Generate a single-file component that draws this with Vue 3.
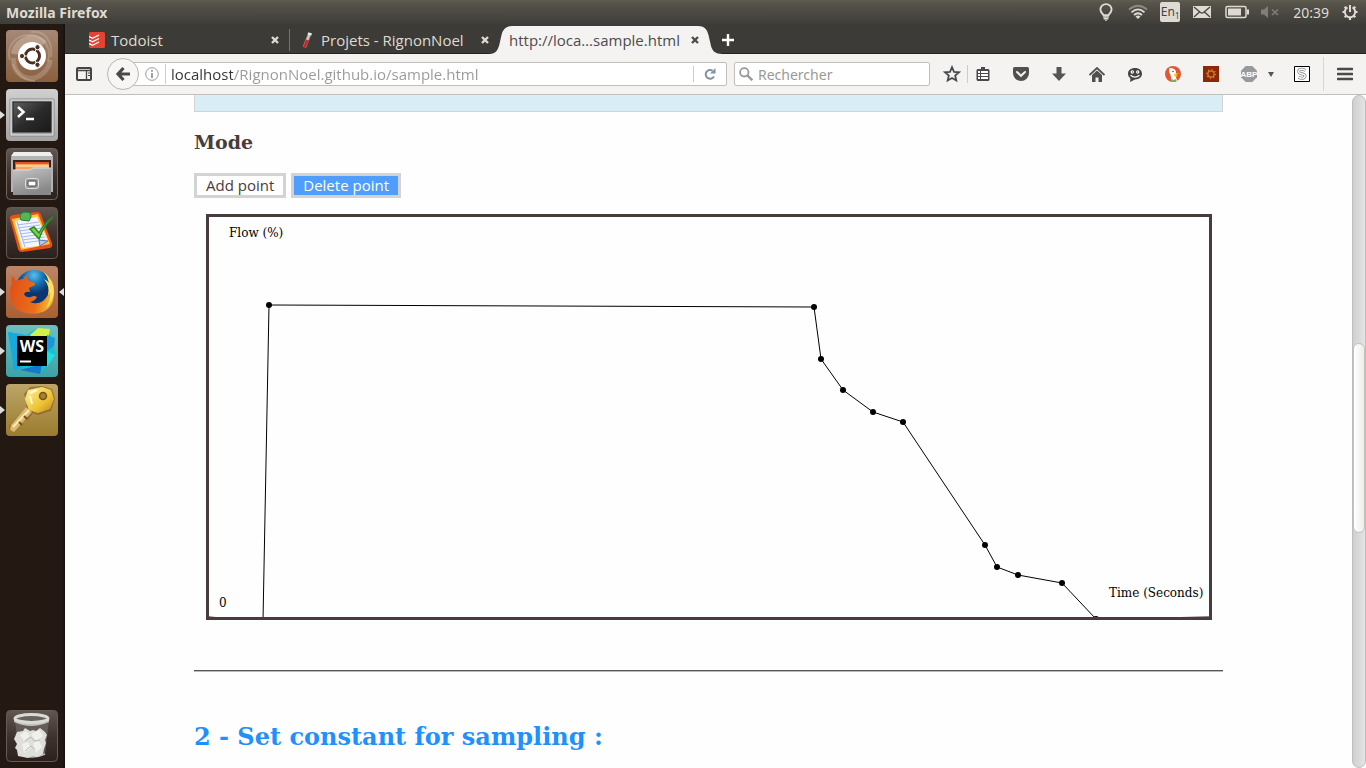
<script setup>
import { ref } from 'vue'

const mode = ref('delete')
const address = ref('localhost/RignonNoel.github.io/sample.html')
const search = ref('')

const points = [
  [60, 88], [605, 90], [612, 142], [634, 173], [664, 195], [694, 205],
  [776, 328], [788, 350], [809, 358], [853, 366], [887, 402],
]
const curve = [[0, 400], [54, 404], ...points, [1000, 400]]
  .map((p) => p.join(','))
  .join(' ')
</script>

<template>
  <div class="desktop">
    <header class="panel">
      <span class="panel-title">Mozilla Firefox</span>
      <div class="indicators">
        <svg class="i-bulb" width="16" height="18" viewBox="0 0 16 18" fill="none" stroke="#dfdbd2">
          <path d="M5.5 12.200C4.900 10.600 2.400 9.400 2.400 6.500a5.600 5.400 0 0 1 11.200 0c0 2.900-2.500 4.100-3.100 5.700z" stroke-width="1.900" />
          <path d="M5.200 14h5.600M5.600 15.800h4.800" stroke-width="1.500" /><path d="M7 17.200h2" />
        </svg>
        <svg class="i-wifi" width="20" height="16" viewBox="0 0 20 16" fill="none" stroke-width="1.800">
          <path d="M1 5.500Q10-2 19 5.500" stroke="#8b8982" />
          <path d="M3.500 8.300Q10 2.500 16.500 8.300M6 11q4-3.600 8 0" stroke="#dfdbd2" />
          <path d="M10 15l-2.500-2.600q2.500-1.800 5 0z" fill="#dfdbd2" />
        </svg>
        <span class="lang">En<sub>1</sub></span>
        <svg class="i-mail" width="18" height="14" viewBox="0 0 18 14">
          <path d="M0 1h18v12H0z" fill="#dfdbd2" />
          <path d="M1 2l6.500 5.500q1.500 1.200 3 0L17 2M1 12l5.500-5M17 12l-5.500-5" fill="none" stroke="#44433d" stroke-width="1.300" />
        </svg>
        <svg class="i-battery" width="24" height="14" viewBox="0 0 24 14">
          <rect x="1" y="1.500" width="20" height="11" rx="1.500" fill="none" stroke="#dfdbd2" stroke-width="1.500" />
          <path d="M3 3.500h13v7H3zM22 4.500h2v5h-2z" fill="#dfdbd2" />
        </svg>
        <svg class="i-sound" width="18" height="14" viewBox="0 0 18 14">
          <path d="M0 4.500h3L7 1v12L3 9.500H0z" fill="#807e77" />
          <path d="M11 4.500l6 5.500M17 4.500L11 10" stroke="#807e77" stroke-width="1.600" />
        </svg>
        <span class="clock">20:39</span>
        <svg class="i-power" width="18" height="18" viewBox="0 0 18 18" fill="none" stroke="#dfdbd2">
          <path d="M6.500 4.400a5.200 5.200 0 1 0 5 0" stroke-width="2" />
          <path d="M9 2v7" stroke-width="2" />
          <path d="M9 14v3M1.500 9h2.500M14 9h2.500M3.700 3.700l1.700 1.700M14.300 3.700l-1.700 1.700M3.700 14.300l1.700-1.700M14.300 14.300l-1.700-1.700" stroke-width="2.200" />
        </svg>
      </div>
    </header>

    <nav class="launcher" aria-label="Launcher">
      <button class="app" aria-label="Dash">
        <svg viewBox="0 0 52 52">
          <defs>
            <linearGradient id="dashBg" x2="0" y2="1"><stop stop-color="#a58977" /><stop offset=".5" stop-color="#977358" /><stop offset="1" stop-color="#89603f" /></linearGradient>
          </defs>
          <rect width="52" height="52" rx="4" fill="url(#dashBg)" />
          <g fill="none" stroke="#e8d9cc">
            <path d="M4 30C0 18 8 6 22 5c16-1 24 14 20 26" opacity=".25" stroke-width="2" />
            <path d="M8 24C12 8 30 4 38 14" opacity=".35" stroke-width="7" />
            <path d="M8 28c-2 12 8 22 20 20 8-2 16-10 16-18" opacity=".25" stroke-width="5" />
            <path d="M25 2c14-2 22 10 20 25M7 34q6 16 22 17" opacity=".25" stroke-width="2" />
          </g>
          <circle cx="26" cy="26" r="14" fill="#fff" />
          <circle cx="26.500" cy="26" r="7" fill="none" stroke="#4c2f20" stroke-width="3" />
          <path d="M26.500 26L18 26M26.500 26l4.500-8M26.500 26l4.500 8" stroke="#fff" stroke-width="1" />
          <circle cx="26.500" cy="26" r="5" fill="#fff" />
          <g fill="#4c2f20" stroke="#fff" stroke-width="1"><circle cx="16" cy="26" r="2.600" /><circle cx="31.500" cy="17.200" r="2.600" /><circle cx="31.500" cy="34.800" r="2.600" /></g>
        </svg>
      </button>
      <button class="app running" aria-label="Terminal">
        <svg viewBox="0 0 52 52">
          <defs>
            <linearGradient id="termBg" x2="0" y2="1"><stop stop-color="#d0d0d0" /><stop offset="1" stop-color="#a4a4a4" /></linearGradient>
            <linearGradient id="termScreen" x2="1" y2="1"><stop stop-color="#606060" /><stop offset=".5" stop-color="#2b2b2b" /><stop offset="1" stop-color="#1a1a1a" /></linearGradient>
          </defs>
          <rect width="52" height="52" rx="4" fill="url(#termBg)" />
          <rect x="4" y="10" width="44" height="37" rx="1" fill="#eee" stroke="#888" />
          <rect x="5.500" y="11.500" width="41" height="34" fill="#a5a5a5" />
          <rect x="7" y="13" width="38" height="30" fill="url(#termScreen)" stroke="#222" />
          <path d="M12 18l5.500 5-5.500 5" fill="none" stroke="#fff" stroke-width="2.500" />
          <path d="M20 30h8" stroke="#fff" stroke-width="2.500" />
        </svg>
      </button>
      <button class="app" aria-label="Files">
        <svg viewBox="0 0 52 52">
          <defs>
            <linearGradient id="darkTile" x2="0" y2="1"><stop stop-color="#625651" /><stop offset=".5" stop-color="#3e332e" /><stop offset="1" stop-color="#2b211c" /></linearGradient>
            <linearGradient id="drawer" x2=".4" y2="1"><stop stop-color="#c5c5c5" /><stop offset="1" stop-color="#888" /></linearGradient>
          </defs>
          <rect x=".5" y=".5" width="51" height="51" rx="4" fill="url(#darkTile)" stroke="#70645e" />
          <path d="M8 4h36l3 5v35h-2V12H7v32H5V9z" fill="#b4b4b4" /><path d="M8 4h36l3 4H5z" fill="#eee" />
          <path d="M7 12h38v12H7z" fill="#3a201a" />
          <path d="M9 14h34v8H9z" fill="#df5523" /><path d="M10 16h33v7H10z" fill="#f9a45c" /><path d="M10 18h33" stroke="#fff3dc" />
          <path d="M7 22h17l3-2h18v27H7z" fill="url(#drawer)" />
          <path d="M7 22h17l3-2h18" fill="none" stroke="#ddd" />
          <rect x="19.500" y="30.500" width="13" height="10" rx="2" fill="#999" stroke="#ddd" />
          <rect x="22" y="33" width="8" height="5" rx="1" fill="#fff" stroke="#444" />
        </svg>
      </button>
      <button class="app" aria-label="Tasks">
        <svg viewBox="0 0 52 52">
          <rect x=".5" y=".5" width="51" height="51" rx="4" fill="url(#darkTile)" stroke="#665a54" />
          <path d="M4 12q-1-3 3-4l24-3q3 0 4 3l11 28q1 4-2 5l-28 4q-3 0-4-3z" fill="#e95018" />
          <path d="M6 12l26-5 12 30-29 6z" fill="#ffc73b" />
          <path d="M9 14l22-4 11 24-10 5-16 2z" fill="#f3f5ff" />
          <path d="M11 18l22-3M12 21l22-3M13 24l22-3M14 27l22-3M15 30l23-3M16 33l23-3M17 36l22-3M11 14l8 26" stroke="#a9b9ee" stroke-width="1" />
          <path d="M34 39l-1-6 9 1z" fill="#b5c8e9" stroke="#5a78b5" />
          <path d="M14 10q0-5 6-5 5 0 5 5l-2 4-8-1z" fill="#59b458" stroke="#277d35" />
          <path d="M24 22l4-2 5 6Q38 16 47 10q-9 8-14 22z" fill="#77d34d" stroke="#298c22" stroke-width="1.500" />
        </svg>
      </button>
      <button class="app running focused" aria-label="Firefox">
        <svg viewBox="0 0 52 52">
          <defs>
            <linearGradient id="foxBg" x2="0" y2="1"><stop stop-color="#bc8568" /><stop offset="1" stop-color="#a96034" /></linearGradient>
            <radialGradient id="globe" cx=".5" cy=".15"><stop stop-color="#59c0e9" /><stop offset=".5" stop-color="#1874b6" /><stop offset="1" stop-color="#0b3570" /></radialGradient>
            <linearGradient id="fox" x1="0" x2="1" y2=".2"><stop stop-color="#df4d18" /><stop offset=".7" stop-color="#ea6f1c" /><stop offset="1" stop-color="#f6b32e" /></linearGradient>
          </defs>
          <rect width="52" height="52" rx="4" fill="url(#foxBg)" />
          <circle cx="28" cy="22" r="18" fill="url(#globe)" />
          <path d="M6 10q2 1 4 5 4-2 7-2 2-4 6-5-3 3-1 6l4 2q4 1 3 3l-6 3 1 4q-5-1-6 2 2 4 7 3 3-2 6 0-2 4-7 5 7 3 13-1 7-6 6-14 2 1 2 4 3-9-2-16 5 7 5 18 0 20-22 21Q4 46 4 27 4 21 6 18 5 14 6 10z" fill="url(#fox)" />
          <path d="M38 6q10 8 10 20-1 10-8 16 5-9 4-16l-2 3q2-9-4-16 4 2 5 4-1-6-5-11z" fill="#ffe05f" />
        </svg>
      </button>
      <button class="app running" aria-label="WebStorm">
        <svg viewBox="0 0 52 52">
          <defs><linearGradient id="wsBg" x2="0" y2="1"><stop stop-color="#6cbfc1" /><stop offset="1" stop-color="#3da2a7" /></linearGradient></defs>
          <rect width="52" height="52" rx="4" fill="url(#wsBg)" />
          <path d="M2 7l18 3 12-7 12 7 5 19-8 12-6 6-19-5-7 1z" fill="#12c0d8" />
          <path d="M2 7l17 3-4 34-7 1z" fill="#18a9da" /><path d="M24 10l8-7 12 1-2 10-10 3z" fill="#d8ee48" />
          <path d="M41 10l8 3-1 8-7 5z" fill="#1797dd" /><path d="M14 45l22-6-2 10z" fill="#1479cb" /><path d="M40 26l9 4-8 12z" fill="#19e1df" />
          <path d="M11 11h30v30H11z" fill="#000" /><path d="M14 36.500h11" stroke="#fff" stroke-width="2" />
          <text class="ws-text" x="26" y="27" text-anchor="middle">WS</text>
        </svg>
      </button>
      <button class="app running" aria-label="Keys">
        <svg viewBox="0 0 52 52">
          <defs>
            <linearGradient id="keyBg" x2="0" y2="1"><stop stop-color="#bba568" /><stop offset="1" stop-color="#9b7c2d" /></linearGradient>
            <linearGradient id="keyFill" x2="1" y2="1"><stop stop-color="#fff4a0" /><stop offset=".6" stop-color="#efc435" /><stop offset="1" stop-color="#bf861b" /></linearGradient>
          </defs>
          <rect width="52" height="52" rx="4" fill="url(#keyBg)" />
          <path d="M24 3L36 2l10 3 3 10-4 12-13 4-5-2-5 7-3-1-3 5-4 1-3 5-5 1-1-5 17-19 1-5-3-8z" fill="#8a5721" opacity=".6" />
          <path d="M22 6l14-3 9 3 3 9-4 10-12 4-9-3-4-11z" fill="url(#keyFill)" />
          <path d="M20 23l6 5L8 48l-4-2 1-5z" fill="#dcb96c" /><path d="M23 26L7 43" stroke="#fbedb9" stroke-width="2" />
          <path d="M21 35l-3-3M16 41l-3-3" stroke="#7c4d20" stroke-width="2" />
          <circle cx="37" cy="12" r="3.500" fill="#a38132" stroke="#795319" stroke-width="1.500" />
          <path d="M24 9l7-3M24 12l2 8" stroke="#fffbd4" stroke-width="2" />
        </svg>
      </button>
      <button class="app trash" aria-label="Trash">
        <svg viewBox="0 0 52 52">
          <rect x=".5" y=".5" width="51" height="51" rx="4" fill="url(#darkTile)" stroke="#665a54" />
          <path d="M9 10h34l-4 35q-13 5-26 0z" fill="#6d6864" opacity=".7" />
          <path d="M13 44q13 6 26 0" fill="none" stroke="#bbb" stroke-width="1.500" />
          <path d="M11 22l6-1 2-3 5 3 3-1 3 1 4-3 5 4 2 3-2 5 1 3-2 6-1 5-6 3-4-1-5 2-5-1-5-1-1-6-2-2 2-4-3-5z" fill="#dededb" />
          <path d="M14 25l6-4 4 5-6 5zM25 24l8-4 4 6-7 5zM16 34l6-2 3 6-7 5zM27 33l6-2 3 6-6 6z" fill="#f0f0ed" />
          <path d="M19 31l6-4 3 4 6-1M19 41l6-5 4 4" fill="none" stroke="#bbb" />
          <path d="M8 8v4q17 8 35 0V8q-17 7-35 0z" fill="#bfbfbc" />
          <ellipse cx="25.500" cy="8.500" rx="16.500" ry="4" fill="#68625e" stroke="#d9d9d6" stroke-width="3" />
        </svg>
      </button>
    </nav>

    <section class="browser">
      <div class="tabs">
        <div class="tab">
          <svg width="16" height="16" viewBox="0 0 16 16"><rect width="16" height="16" rx="1.500" fill="#e44332" /><path d="M0 4.500l3.500 1.800L10 3M0 8l3.500 1.800L10 6.500M0 11.500l3.500 1.800L10 10" fill="none" stroke="#fff" stroke-width="1.300" /></svg>
          <button class="tab-label">Todoist</button>
          <button class="close" aria-label="Close tab"><svg width="8" height="8" viewBox="0 0 8 8"><path d="M1 1l6 6M7 1L1 7" stroke="currentColor" stroke-width="2.400" /></svg></button>
        </div>
        <div class="tab divided">
          <svg width="16" height="16" viewBox="0 0 16 16"><path d="M9.500.5l3 1-5.500 14-3-1z" fill="#c8c8c8" stroke="#777" stroke-width=".6" /><path d="M7 7.500l3 1-3.200 7-2.600-1z" fill="#cf2620" /><path d="M9.300.5l3.500 1-.5 2-3.600-1z" fill="#eee" /></svg>
          <button class="tab-label">Projets - RignonNoel</button>
          <button class="close" aria-label="Close tab"><svg width="8" height="8" viewBox="0 0 8 8"><path d="M1 1l6 6M7 1L1 7" stroke="currentColor" stroke-width="2.400" /></svg></button>
        </div>
        <div class="tab active">
          <svg class="tab-shape" viewBox="0 0 234 28" preserveAspectRatio="none"><path d="M0 28C7 28 9 24 10.500 18L12.500 9C14 3 17 0 23 0H209c6 0 9 3 10.500 9l2.500 11c1.500 5 4 8 12 8z" fill="#f4f3f2" /></svg>
          <button class="tab-label">http://loca…sample.html</button>
          <button class="close" aria-label="Close tab"><svg width="8" height="8" viewBox="0 0 8 8"><path d="M1 1l6 6M7 1L1 7" stroke="currentColor" stroke-width="2.400" /></svg></button>
        </div>
        <button class="new-tab" aria-label="New tab"><svg width="14" height="14" viewBox="0 0 14 14"><path d="M7 1v12M1 7h12" stroke="#fff" stroke-width="2.400" /></svg></button>
      </div>

      <div class="toolbar">
        <button class="tool sidebar" aria-label="Sidebar"><svg width="16" height="14" viewBox="0 0 16 14"><rect x="1" y="1" width="14" height="12" rx="1" fill="none" stroke="#444" stroke-width="2" /><path d="M1 3.500h14M10.500 3v10" stroke="#444" stroke-width="1.300" /><path d="M12 6h2M12 8.500h2" stroke="#444" /></svg></button>
        <button class="back" aria-label="Back"><svg width="16" height="16" viewBox="0 0 16 16"><path d="M8.500 2L3 8l5.500 6M3 8h12" fill="none" stroke="#4a4a4a" stroke-width="3.200" /></svg></button>
        <div class="address">
          <svg class="info" width="14" height="14" viewBox="0 0 14 14"><circle cx="7" cy="7" r="6.300" fill="none" stroke="#999" /><path d="M7 3v1.800M7 6v5" stroke="#888" stroke-width="1.600" /></svg>
          <input v-model="address" class="url" type="text" aria-label="Address" spellcheck="false" />
          <button class="reload" aria-label="Reload"><svg width="12" height="12" viewBox="0 0 12 12"><path d="M8.500 2.600A4.400 4.400 0 1 0 10 8.500" fill="none" stroke="#8292a2" stroke-width="2" /><path d="M11.500 0v5.500H6z" fill="#8292a2" /></svg></button>
        </div>
        <div class="search">
          <svg width="14" height="14" viewBox="0 0 14 14" fill="none" stroke="#999"><circle cx="5.300" cy="5.300" r="4.200" stroke-width="1.800" /><path d="M8.500 8.500l4.800 4.800" stroke-width="2.400" /></svg>
          <input v-model="search" type="text" placeholder="Rechercher" aria-label="Rechercher" />
        </div>
        <div class="tools">
          <button class="tool star" aria-label="Bookmark"><svg width="18" height="18" viewBox="0 0 18 18"><path d="M9 2.200l2 4.600 5 .5-3.800 3.300 1.100 4.900L9 13l-4.300 2.500 1.100-4.900L2 7.300l5-.5z" fill="none" stroke="#4a4a4a" stroke-width="1.800" /></svg></button>
          <button class="tool ruled" aria-label="Bookmarks list"><svg width="14" height="16" viewBox="0 0 14 16"><path d="M5 1h4v2h3.500l1 1v10l-1 1h-11l-1-1V4l1-1H5z" fill="#4a4a4a" /><path d="M2 6h2M5 6h7M2 9h2M5 9h7M2 12h2M5 12h7" stroke="#fff" stroke-width="1.800" /></svg></button>
          <button class="tool" aria-label="Pocket"><svg width="16" height="14" viewBox="0 0 16 14"><path d="M0 1.500Q0 0 1.500 0h13Q16 0 16 1.500V6a8 8 0 0 1-16 0z" fill="#505050" /><path d="M4 5l4 3.800L12 5" fill="none" stroke="#f4f3f2" stroke-width="2" stroke-linecap="round" /></svg></button>
          <button class="tool" aria-label="Downloads"><svg width="14" height="14" viewBox="0 0 14 14"><path d="M4.500 0h5v6.500H14L7 14 0 6.500h4.500z" fill="#555" /></svg></button>
          <button class="tool" aria-label="Home"><svg width="16" height="15" viewBox="0 0 16 15"><path d="M.5 8L8 1l7.500 7" fill="none" stroke="#505050" stroke-width="1.800" /><path d="M3 8l5-4.500L13 8v7H9.500v-4.500h-3V15H3z" fill="#505050" /></svg></button>
          <button class="tool" aria-label="Chat"><svg width="16" height="15" viewBox="0 0 16 15"><path d="M8 1c4.200 0 7 2.300 7 5.700s-2.800 5.700-7 5.700L3 15l.5-3.500C2 10.400 1 8.600 1 6.700 1 3.300 3.800 1 8 1z" fill="#444" /><circle cx="5.300" cy="5" r="1.700" fill="#fff" /><circle cx="10.700" cy="5" r="1.700" fill="#fff" /><path d="M5 5h1M10 5h1" stroke="#444" /><path d="M3.500 8.300q4.500 3.800 9 0" fill="none" stroke="#fff" stroke-width="1.300" /></svg></button>
          <button class="tool" aria-label="DuckDuckGo"><svg width="16" height="16" viewBox="0 0 16 16"><circle cx="8" cy="8" r="8" fill="#de5833" /><path d="M4 2.500q2-1 4 0 3 1 3 4l-.5 3 1.500 5q-2 1.500-5 1L5.500 9Q3.500 6 4 2.500z" fill="#fff" /><path d="M9 8q3-1 5-.5L11 9l2 1.200Q10 11 9 10z" fill="#fdd20a" /><path d="M7 13l2 1 2-1v3H7z" fill="#65bc46" /><circle cx="8" cy="5.500" r=".8" fill="#2d4f8e" /></svg></button>
          <button class="tool" aria-label="Sun"><svg width="16" height="16" viewBox="0 0 16 16"><path d="M0 0h16v16H0z" fill="#8c2806" /><circle cx="8" cy="8" r="3.200" fill="none" stroke="#d9862a" stroke-width="1.300" /><circle cx="8" cy="8" r="4.600" fill="none" stroke="#d9862a" stroke-width="1.200" stroke-dasharray="1 2.600" /></svg></button>
          <button class="tool" aria-label="Adblock Plus"><svg width="16" height="16" viewBox="0 0 16 16"><path d="M4.700 0h6.600L16 4.700v6.600L11.300 16H4.700L0 11.300V4.700z" fill="#999" /><text class="abp-text" x="8" y="11" text-anchor="middle">ABP</text></svg></button>
          <button class="caret" aria-label="Adblock menu"><svg width="6" height="5" viewBox="0 0 6 5"><path d="M0 0h6L3 5z" fill="#555" /></svg></button>
          <button class="tool stylish" aria-label="Stylish"><svg width="16" height="16" viewBox="0 0 16 16"><path d="M.5.5h15v15H.5z" fill="#fff" stroke="#000" /><path d="M11.500 4.300Q8 2.500 5.500 3.700c-1.500 1.400-.8 3.300 1.200 3.800l3 .8c2 .7 1.700 3-.2 3.700q-2.500.5-5-.7" fill="none" stroke="#888" stroke-width="3" /><path d="M11.500 4.300Q8 2.500 5.500 3.700c-1.500 1.400-.8 3.300 1.200 3.800l3 .8c2 .7 1.700 3-.2 3.700q-2.500.5-5-.7" fill="none" stroke="#fff" stroke-width="1.400" /></svg></button>
          <button class="menu" aria-label="Menu"><svg width="16" height="14" viewBox="0 0 16 14"><path d="M1 2h14M1 7h14M1 12h14" stroke="#4a4a4a" stroke-width="2.600" stroke-linecap="round" /></svg></button>
        </div>
      </div>

      <div class="view">
        <main class="page">
          <div class="notice"></div>
          <h3>Mode</h3>
          <div class="modes">
            <button :class="{ selected: mode === 'add' }" @click="mode = 'add'">Add point</button>
            <button :class="{ selected: mode === 'delete' }" @click="mode = 'delete'">Delete point</button>
          </div>
          <figure class="chart">
            <svg viewBox="0 0 1000 400">
              <polyline :points="curve" fill="none" stroke="#000" stroke-width="1" />
              <circle v-for="(p, i) in points" :key="i" :cx="p[0]" :cy="p[1]" r="3" />
              <text x="20" y="20">Flow (%)</text>
              <text x="10" y="390">0</text>
              <text x="900" y="380">Time (Seconds)</text>
            </svg>
          </figure>
          <hr />
          <h2>2 - Set constant for sampling :</h2>
        </main>
        <div class="scrollbar"><div class="thumb"></div></div>
      </div>
    </section>
  </div>
</template>

<style>
body { margin: 0; overflow: hidden; }
</style>

<style scoped>
.desktop {
  display: grid;
  grid-template: 24px minmax(0, 1fr) / 65px minmax(0, 1fr);
  height: 100vh;
  font-family: "Noto Sans", "Open Sans", sans-serif;
  font-size: 14px;
}
button { margin: 0; padding: 0; border: 0; background: none; font: inherit; color: inherit; }
input { min-width: 0; padding: 0; border: 0; outline: 0; background: none; font: inherit; }
svg { display: block; flex: none; }

.panel {
  grid-column: 1 / 3;
  display: flex;
  align-items: center;
  justify-content: space-between;
  padding: 0 7px 0 6px;
  background: linear-gradient(#5f5d51, #55534a 15%, #3e3d39);
  color: #dfdbd2;
}
.panel-title { font-size: 14px; font-weight: 700; }
.indicators { display: flex; align-items: center; }
.i-wifi { margin-left: 14px; }
.lang {
  margin-left: 12px;
  width: 20px;
  height: 20px;
  border-radius: 2px;
  background: #dfdbd2;
  color: #44433d;
  font-size: 12px;
  line-height: 20px;
  text-align: center;
  white-space: nowrap;
}
.lang sub { font-size: 8px; line-height: 8px; }
.i-mail { margin-left: 13px; }
.i-battery { margin-left: 14px; }
.i-sound { margin-left: 12px; }
.clock { margin: 0 12px 0 14px; }

.launcher {
  display: flex;
  flex-direction: column;
  gap: 7px;
  padding: 6px 7px 6px 6px;
  background: linear-gradient(90deg, #241813 62px, #17100c);
}
.app { position: relative; width: 52px; height: 52px; }
.app svg { width: 52px; height: 52px; }
.running::before, .focused::after {
  content: "";
  position: absolute;
  top: 22px;
  left: -6px;
  border: 4px solid transparent;
  border-left: 5px solid #ddd;
  border-right: 0;
}
.focused::after { left: auto; right: -6px; border-left: 0; border-right: 5px solid #ddd; }
.trash { margin-top: auto; }
.ws-text { font: 700 16px "Open Sans", sans-serif; fill: #fff; }

.browser { display: flex; flex-direction: column; min-height: 0; }
.tabs {
  display: flex;
  align-items: flex-end;
  height: 30px;
  padding-left: 14px;
  background: linear-gradient(#3c3b37 29px, #262522 29px);
  color: #dfdbd2;
}
.tab {
  position: relative;
  display: flex;
  align-items: center;
  gap: 6px;
  width: 210px;
  height: 28px;
  padding: 0 10px;
}
.divided::before {
  content: "";
  position: absolute;
  left: 0;
  top: 3px;
  width: 1px;
  height: 22px;
  background: #77756f;
}
.tab, .toolbar, .search, .address { box-sizing: border-box; }
.tab-label {
  flex: 1;
  min-width: 0;
  z-index: 1;
  font-family: "Open Sans", sans-serif;
  font-size: 15px;
  line-height: 20px;
  text-align: left;
  white-space: nowrap;
}
.close { display: grid; z-index: 1; }
.active { color: #4c4c4c; }
.tab-shape { position: absolute; left: -10px; top: 0; width: 234px; height: 28px; }
.new-tab { display: grid; place-items: center; width: 38px; height: 28px; }

.toolbar {
  display: flex;
  align-items: center;
  height: 41px;
  border-bottom: 1px solid #c2beba;
  background: #f4f3f2;
}
.tool { display: grid; place-items: center; width: 32px; height: 32px; }
.sidebar { margin-left: 3px; }
.back {
  display: grid;
  place-items: center;
  box-sizing: border-box;
  z-index: 1;
  width: 32px;
  height: 32px;
  margin-left: 7px;
  border: 1px solid #b9b6b2;
  border-radius: 50%;
  background: #f7f6f5;
}
.address, .search {
  display: flex;
  align-items: center;
  height: 24px;
  border: 1px solid #c2beba;
  border-radius: 2px;
  background: #fff;
}
.address { flex: 1; margin-left: -8px; }
.info { margin-left: 13px; }
.url {
  flex: 1;
  margin-left: 6px;
  padding-left: 5px;
  border-left: 1px solid #ccc;
  background: linear-gradient(90deg, #333 67px, #999 67px);
  background-clip: text;
  -webkit-background-clip: text;
  color: transparent;
  font-family: "Open Sans", sans-serif;
  font-size: 15px;
}
.url { height: 20px; line-height: 20px; }
.reload { display: grid; place-items: center; width: 33px; height: 16px; border-left: 1px solid #ccc; }
.search { width: 196px; margin-left: 7px; padding-left: 4px; gap: 5px; }
.search input { flex: 1; }
.search input::placeholder { color: #999; opacity: 1; }
.tools { display: flex; align-items: center; gap: 6px; padding-right: 5px; }
.star { width: 28px; margin-left: 8px; margin-right: -5px; }
.ruled { position: relative; }
.ruled::before { content: ""; position: absolute; left: 0; top: 7px; width: 1px; height: 18px; background: #ccc; }
.caret { display: grid; place-items: center; width: 10px; margin-left: -5px; }
.stylish { margin-left: 4px; }
.menu {
  display: grid;
  place-items: center;
  width: 38px;
  height: 34px;
  padding-left: 5px;
  margin-left: -1px;
  border-left: 1px solid #d8d6d3;
}
.abp-text { font: 700 8px "Liberation Sans", sans-serif; fill: #fff; }

.view { display: flex; flex: 1; min-height: 0; background: #fefefe; }
.page {
  flex: 1;
  min-width: 0;
  padding: 0 129px;
  overflow: hidden;
  font-family: "DejaVu Serif", serif;
}
.notice { height: 16px; border: 1px solid #d3d3d3; border-top: 0; background: #d9edf7; }
h3 { margin: 19px 0; color: #483c3c; font-size: 19px; line-height: 23px; }
.modes { display: flex; gap: 5px; }
.modes button {
  height: 25px;
  padding: 0 9px;
  border: 3px solid #d3d3d3;
  background: #fff;
  color: #483c3c;
  font-family: "Open Sans", sans-serif;
  font-size: 15px;
  line-height: 19px;
}
.modes .selected { background: #4f9dfd; color: #fff; }
.chart { margin: 16px 11px 50px 12px; border: 3px solid #483c3c; }
.chart svg { width: 100%; overflow: hidden; }
.chart text { font-family: "DejaVu Serif", serif; font-size: 12px; }
hr { height: 0; margin: 0; border: 0; border-top: 1px solid #555; border-bottom: 1px solid #bbb; }
h2 { margin: 50px 0 0; color: #1e90ff; font-size: 24px; line-height: 30px; }

.scrollbar {
  box-sizing: border-box;
  width: 14px;
  border: 1px solid #bfbdb9;
  border-radius: 7px;
  background: linear-gradient(90deg, #cfcfcf, #e4e4e4);
}
.thumb {
  box-sizing: border-box;
  height: 190px;
  margin-top: 247px;
  border: 1px solid #c4c2be;
  border-radius: 6px;
  background: linear-gradient(90deg, #fff, #eeedec);
}
</style>
